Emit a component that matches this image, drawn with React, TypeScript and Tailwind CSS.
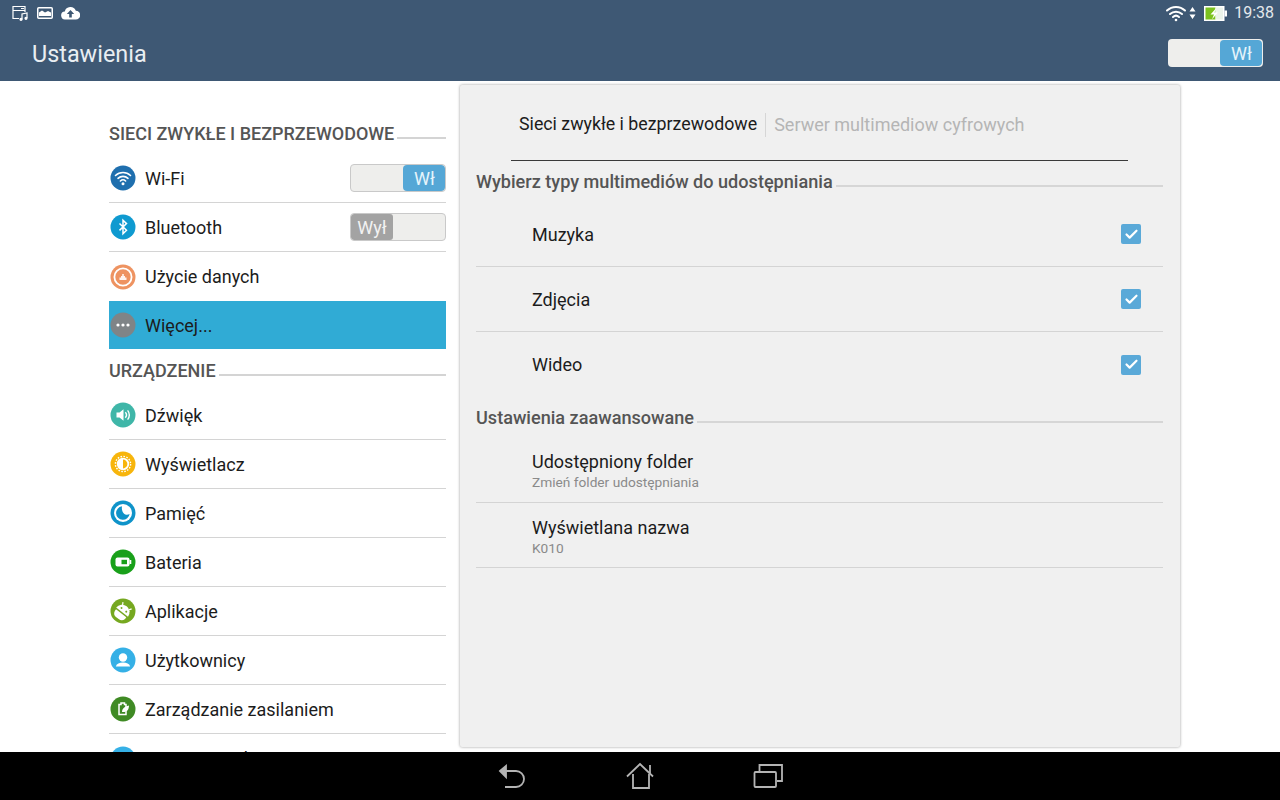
import { Check } from "lucide-react";
import type { ReactNode } from "react";

const Toggle = ({ on, big }: { on: boolean; big?: boolean }) => {
  if (on) {
    return (
      <div className={`flex h-[28px] ${big ? "w-[95px] border-transparent" : "w-[96px] border-[#c9c9c9]"} overflow-hidden rounded-[4px] border bg-[#eeeeec]`}>
        <div className="flex-1" />
        <div className="flex w-[42px] items-center justify-center rounded-[4px] bg-[#55a7d6] pl-[1px] text-[18px] text-[#e6f4fb]">Wł</div>
      </div>
    );
  }
  return (
    <div className="flex h-[28px] w-[96px] overflow-hidden rounded-[4px] border border-[#c9c9c9] bg-[#eeeeec]">
      <div className="flex w-[42px] items-center justify-center rounded-[3px] bg-[#a3a3a3] text-[18px] text-[#f2f2f2]">Wył</div>
    </div>
  );
};

const Circle = ({ color, children }: { color: string; children?: ReactNode }) => (
  <svg width="26" height="26" viewBox="0 0 26 26" className="shrink-0">
    <circle cx="13" cy="13" r="12.5" fill={color} />
    {children}
  </svg>
);

const icons: Record<string, ReactNode> = {
  wifi: (
    <Circle color="#1f6fae">
      <g fill="none" stroke="#fff" strokeWidth="1.6" strokeLinecap="round">
        <path d="M5.500 10.500a11 11 0 0 1 15 0" />
        <path d="M8 13.300a7.400 7.400 0 0 1 10 0" />
        <path d="M10.400 16a3.800 3.800 0 0 1 5.200 0" />
      </g>
      <circle cx="13" cy="18.700" r="1.500" fill="#fff" />
    </Circle>
  ),
  bluetooth: (
    <Circle color="#0f9ad0">
      <path d="M9.500 9.500l7 6.800-3.500 3.400V6.300l3.500 3.300-7 6.800" fill="none" stroke="#fff" strokeWidth="1.500" />
    </Circle>
  ),
  data: (
    <Circle color="#ee9361">
      <circle cx="13" cy="13" r="8.600" fill="none" stroke="#fff" strokeWidth="1.800" />
      <path d="M9.500 16v-2.500h1.500V12h1.200v-2h1.600v2H15v1.500h1.500V16z" fill="#fff" opacity="0.9" />
    </Circle>
  ),
  more: (
    <Circle color="#7f8487">
      <circle cx="8" cy="13" r="1.600" fill="#fff" />
      <circle cx="13" cy="13" r="1.600" fill="#fff" />
      <circle cx="18" cy="13" r="1.600" fill="#fff" />
    </Circle>
  ),
  sound: (
    <Circle color="#3fb6a8">
      <path d="M6.500 10.500h3l4-3.200v11.400l-4-3.200h-3z" fill="#fff" />
      <path d="M15.300 10.300a4 4 0 0 1 0 5.400M17.600 8.400a7 7 0 0 1 0 9.200" fill="none" stroke="#fff" strokeWidth="1.400" />
    </Circle>
  ),
  display: (
    <Circle color="#f7b50c">
      <circle cx="13" cy="13" r="6.200" fill="#fff" />
      <path d="M13 8.600a4.400 4.400 0 0 1 0 8.800z" fill="#f7b50c" />
      <circle cx="13" cy="13" r="7.600" fill="none" stroke="#fff" strokeWidth="1.400" strokeDasharray="1.600 1.400" />
    </Circle>
  ),
  memory: (
    <Circle color="#0f93c9">
      <circle cx="13" cy="13" r="9" fill="#fff" />
      <path d="M12 6.300a6.800 6.800 0 1 0 7.600 7.700c-1 .6-2.200.9-3.300.7-3.200-.5-5-4.500-4.300-8.400z" fill="#0f93c9" />
    </Circle>
  ),
  battery: (
    <Circle color="#19a01a">
      <rect x="5.500" y="8.500" width="14" height="9" rx="2" fill="#fff" />
      <rect x="19.500" y="11" width="1.800" height="4" fill="#fff" />
      <rect x="11.500" y="10.800" width="5.500" height="4.400" fill="#19a01a" />
    </Circle>
  ),
  apps: (
    <Circle color="#76a820">
      <g transform="rotate(38 13 13)">
        <path d="M5.500 14.500a7.500 7.500 0 0 1 15 0z" fill="#fff" />
        <path d="M9 8.500L7.500 6M17 8.500L18.500 6" stroke="#fff" strokeWidth="1.200" />
        <circle cx="10" cy="11.500" r="1" fill="#76a820" />
        <circle cx="16" cy="11.500" r="1" fill="#76a820" />
        <path d="M6.500 16h13v2a5 5 0 0 1-5 4h-3a5 5 0 0 1-5-4z" fill="#fff" />
      </g>
    </Circle>
  ),
  users: (
    <Circle color="#35b0e6">
      <circle cx="13" cy="10.500" r="4.200" fill="#fff" />
      <path d="M5.800 19.500c1-3 3.500-4 7.200-4s6.200 1 7.200 4z" fill="#fff" />
    </Circle>
  ),
  power: (
    <Circle color="#3f8a24">
      <path d="M9 8.500h2V7h3.500v1.500H16v10H9z" fill="none" stroke="#fff" strokeWidth="1.500" />
      <path d="M12 16c0-3 2-5.500 7-6.500 0 4-2 7-7 6.500z" fill="#fff" />
    </Circle>
  ),
  next: <Circle color="#35b0e6" />,
};

const Row = ({ icon, label, right, active, last }: { icon: string; label: string; right?: ReactNode; active?: boolean; last?: boolean }) => (
  <div className={`flex ${active ? "h-[48px] bg-[#30abd5]" : "h-[49px]"} shrink-0 items-center ${last ? "" : "border-b border-[#d4d4d4]"}`}>
    <div className="ml-[1px] flex w-[35px] shrink-0">{icons[icon]}</div>
    <span className="text-[18px] text-[#1c1c1c]">{label}</span>
    {right && <div className="ml-auto">{right}</div>}
  </div>
);

const SideHead = ({ title, tall }: { title: string; tall?: boolean }) => (
  <div className={`flex ${tall ? "h-[42px] pt-[2px]" : "h-[40px]"} shrink-0 items-center`}>
    <span className="mb-[2px] text-[18px] font-medium text-[#555555]">{title}</span>
    <div className="mt-[8px] ml-[3px] h-[2px] flex-1 bg-[#d4d4d4]" />
  </div>
);

const PanelHead = ({ title }: { title: string }) => (
  <div className="flex items-center">
    <span className="text-[18.100px] font-medium text-[#555555]">{title}</span>
    <div className="mt-[9px] ml-[3px] h-[2px] flex-1 bg-[#d6d6d6]" />
  </div>
);

const CheckRow = ({ label, divider }: { label: string; divider?: boolean }) => (
  <div className={`flex h-[65px] items-center pl-[56px] pr-[22px] ${divider ? "border-b border-[#d4d4d4]" : ""}`}>
    <span className="flex-1 text-[18px] text-[#1c1c1c]">{label}</span>
    <div className="flex h-[20px] w-[20px] items-center justify-center rounded-[2px] bg-[#5aa9d8]">
      <Check size={15} strokeWidth={3.5} color="#ffffff" />
    </div>
  </div>
);

export default function App() {
  return (
    <div className="flex h-[800px] w-[1280px] flex-col overflow-hidden bg-white font-['Roboto',sans-serif]">
      <header className="h-[81px] shrink-0 bg-[#3e5874] text-white">
        <div className="flex h-[26px] items-center pl-[12px] pr-[6px]">
          <svg width="17" height="16" viewBox="0 0 17 16" fill="none" stroke="#fff" strokeWidth="1.200">
            <path d="M7 13.500H1V1.500h12V7" />
            <path d="M1 5.500h12M9 3.500h3" />
            <path d="M10 14.500V9l5-1v5" />
            <circle cx="9" cy="14.300" r="1" fill="#fff" />
            <circle cx="14" cy="13.300" r="1" fill="#fff" />
          </svg>
          <svg width="16" height="12" viewBox="0 0 16 12" className="ml-[8px]">
            <rect x="0.750" y="0.750" width="14.500" height="10.500" rx="1" fill="none" stroke="#fff" strokeWidth="1.500" />
            <path d="M2 9V5.500l3-2 3 2 3-1.500 3 1.500V9z" fill="#fff" />
          </svg>
          <svg width="19" height="14" viewBox="0 0 19 14" className="ml-[8px]">
            <path d="M4.500 13.500a4 4 0 0 1-.7-8 5.800 5.800 0 0 1 11-.8 4.400 4.400 0 0 1 0 8.800z" fill="#fff" />
            <path d="M9.500 4l-3.700 4h2.400v3.500h2.600V8h2.400z" fill="#3e5874" />
          </svg>
          <div className="ml-auto flex items-center">
            <svg width="22" height="18" viewBox="0 0 22 18" fill="none" stroke="#fff" strokeWidth="2" strokeLinecap="round">
              <path d="M2 6.500a13 13 0 0 1 18 0" />
              <path d="M5 10a9 9 0 0 1 12 0" />
              <path d="M8 13a4.500 4.500 0 0 1 6 0" />
              <circle cx="11" cy="16" r="1.300" fill="#fff" stroke="none" />
            </svg>
            <svg width="7" height="14" viewBox="0 0 7 14" className="ml-[2px]">
              <path d="M3.500 1L6.500 5.500H.5zM3.500 13L.5 8.500h6z" fill="#fff" />
            </svg>
            <svg width="23" height="15" viewBox="0 0 23 15" className="ml-[8px]">
              <rect x="0" y="0" width="20.500" height="15" fill="#fff" />
              <rect x="1.500" y="1.500" width="10" height="12" fill="#7cc21f" />
              <rect x="11.500" y="1.500" width="7.500" height="12" fill="#ecf3ea" />
              <rect x="20.500" y="4.500" width="2.500" height="6" fill="#fff" />
              <path d="M12.500 1.800L6.500 8.500h3.500l-2 4.800 6-6.700h-3.500z" fill="#fff" />
            </svg>
            <span className="ml-[7px] text-[16px] text-[#e4e8ec]">19:38</span>
          </div>
        </div>
        <div className="flex h-[55px] items-center pl-[32px] pr-[17px]">
          <span className="mt-[2px] text-[23.400px] text-[#e9eef2]">Ustawienia</span>
          <div className="ml-auto -mt-[1px]">
            <Toggle on big />
          </div>
        </div>
      </header>

      <main className="flex min-h-0 flex-1 overflow-hidden pl-[109px] pr-[100px]">
        <aside className="mr-[14px] flex w-[337px] shrink-0 flex-col overflow-hidden pt-[33px]">
          <SideHead title="SIECI ZWYKŁE I BEZPRZEWODOWE" />
          <Row icon="wifi" label="Wi-Fi" right={<Toggle on />} />
          <Row icon="bluetooth" label="Bluetooth" right={<Toggle on={false} />} />
          <Row icon="data" label="Użycie danych" last />
          <Row icon="more" label="Więcej..." active last />
          <SideHead title="URZĄDZENIE" tall />
          <Row icon="sound" label="Dźwięk" />
          <Row icon="display" label="Wyświetlacz" />
          <Row icon="memory" label="Pamięć" />
          <Row icon="battery" label="Bateria" />
          <Row icon="apps" label="Aplikacje" />
          <Row icon="users" label="Użytkownicy" />
          <Row icon="power" label="Zarządzanie zasilaniem" />
          <Row icon="next" label="Ustawienia dostosowane" last />
        </aside>

        <section className="mt-[4px] mb-[5px] flex w-[720px] shrink-0 flex-col rounded-[2px] bg-[#f0f0f0] pl-[16px] pr-[17px] shadow-[0_0_3px_rgba(0,0,0,0.4)]">
          <div className="mx-[35px] flex h-[76px] items-center border-b border-[#3a3a3a] pl-[8px] pt-[4px]">
            <span className="text-[17.8px] text-[#1c1c1c]">Sieci zwykłe i bezprzewodowe</span>
            <div className="mx-[8px] h-[24px] w-px bg-[#d6d6d6]" />
            <span className="text-[18px] text-[#b5b5b5]">Serwer multimediow cyfrowych</span>
          </div>
          <div className="mt-[7px] mb-[7px]">
            <PanelHead title="Wybierz typy multimediów do udostępniania" />
          </div>
          <CheckRow label="Muzyka" divider />
          <CheckRow label="Zdjęcia" divider />
          <CheckRow label="Wideo" />
          <div className="mt-[7px] mb-[7px]">
            <PanelHead title="Ustawienia zaawansowane" />
          </div>
          <div className="flex h-[65px] flex-col justify-center border-b border-[#d4d4d4] pl-[56px]">
            <span className="text-[18px] leading-[24px] text-[#1c1c1c]">Udostępniony folder</span>
            <span className="text-[13.700px] leading-[17px] text-[#8a8a8a]">Zmień folder udostępniania</span>
          </div>
          <div className="flex h-[65px] flex-col justify-center border-b border-[#d4d4d4] pl-[56px] pt-[2px]">
            <span className="text-[18px] leading-[24px] text-[#1c1c1c]">Wyświetlana nazwa</span>
            <span className="text-[13.700px] leading-[17px] text-[#8a8a8a]">K010</span>
          </div>
        </section>
      </main>

      <footer className="flex h-[48px] shrink-0 items-center justify-center gap-[98px] bg-black">
        <svg width="30" height="28" viewBox="0 0 30 28" fill="none" stroke="#b4b4b4" strokeWidth="1.800">
          <path d="M9 9h10a8 8 0 0 1 0 16H8" />
          <path d="M3 9l6-5v11z" fill="#b4b4b4" />
        </svg>
        <svg width="30" height="28" viewBox="0 0 30 28" fill="none" stroke="#b4b4b4" strokeWidth="1.800">
          <path d="M2 14.500L15 2l13 12.500" />
          <path d="M8 12v14h16V12" />
          <path d="M25 3v8" />
        </svg>
        <svg width="30" height="28" viewBox="0 0 30 28" fill="none" stroke="#b4b4b4" strokeWidth="1.800">
          <rect x="1.500" y="10" width="21.500" height="15" rx="1" />
          <path d="M6.500 10V3H29v16h-5" />
        </svg>
      </footer>
    </div>
  );
}
